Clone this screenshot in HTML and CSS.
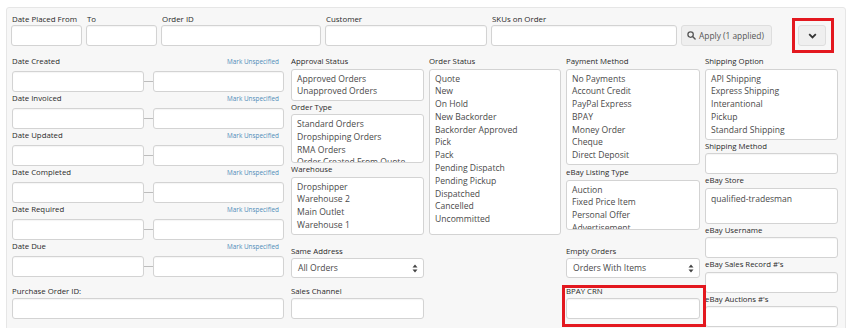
FILE: index.html
```html
<!DOCTYPE html>
<html lang="en">
<head>
  <meta charset="UTF-8" />
  <meta name="viewport" content="width=device-width, initial-scale=1.0"/>
  <title>Order Filters</title>
  <link rel="stylesheet" href="styles.css">
</head>
<body>

<div class="filter-panel">

  <!-- quick search row -->
  <div class="top-row">
    <div class="top-field w-date">
      <label class="top-label">Date Placed From</label>
      <div class="text-input"></div>
    </div>
    <div class="top-field w-date">
      <label class="top-label">To</label>
      <div class="text-input"></div>
    </div>
    <div class="top-field w-order">
      <label class="top-label">Order ID</label>
      <div class="text-input"></div>
    </div>
    <div class="top-field w-customer">
      <label class="top-label">Customer</label>
      <div class="text-input"></div>
    </div>
    <div class="top-field w-sku">
      <label class="top-label">SKUs on Order</label>
      <div class="text-input"></div>
    </div>
    <button class="apply-btn">
      <svg width="9" height="9" viewBox="0 0 10 10"><circle cx="4" cy="4" r="3" fill="none" stroke="#555" stroke-width="1.4"/><path d="M6.2 6.2 L9 9" stroke="#555" stroke-width="1.6" stroke-linecap="round"/></svg>
      Apply (1 applied)
    </button>
    <div class="toggle-wrap marked-toggle">
      <button class="toggle-btn">
        <svg width="9" height="6" viewBox="0 0 9 6"><path d="M1.2 1.2 L4.5 4.4 L7.8 1.2" fill="none" stroke="#333" stroke-width="1.8"/></svg>
      </button>
    </div>
  </div>

  <!-- advanced filters -->
  <div class="adv-grid">

    <div class="col col-dates">
      <div class="date-label"><span class="f-label">Date Created</span><a class="mark-link">Mark Unspecified</a></div>
      <div class="date-range"><div class="text-input"></div><span class="dash"></span><div class="text-input"></div></div>
      <div class="date-label"><span class="f-label">Date Invoiced</span><a class="mark-link">Mark Unspecified</a></div>
      <div class="date-range"><div class="text-input"></div><span class="dash"></span><div class="text-input"></div></div>
      <div class="date-label"><span class="f-label">Date Updated</span><a class="mark-link">Mark Unspecified</a></div>
      <div class="date-range"><div class="text-input"></div><span class="dash"></span><div class="text-input"></div></div>
      <div class="date-label"><span class="f-label">Date Completed</span><a class="mark-link">Mark Unspecified</a></div>
      <div class="date-range"><div class="text-input"></div><span class="dash"></span><div class="text-input"></div></div>
      <div class="date-label"><span class="f-label">Date Required</span><a class="mark-link">Mark Unspecified</a></div>
      <div class="date-range"><div class="text-input"></div><span class="dash"></span><div class="text-input"></div></div>
      <div class="date-label"><span class="f-label">Date Due</span><a class="mark-link">Mark Unspecified</a></div>
      <div class="date-range"><div class="text-input"></div><span class="dash"></span><div class="text-input"></div></div>
      <div class="f-label po-label">Purchase Order ID:</div>
      <div class="text-input"></div>
    </div>

    <div class="col">
      <div class="f-label">Approval Status</div>
      <div class="listbox h-approval">
        <div>Approved Orders</div>
        <div>Unapproved Orders</div>
      </div>
      <div class="f-label">Order Type</div>
      <div class="listbox h-type">
        <div>Standard Orders</div>
        <div>Dropshipping Orders</div>
        <div>RMA Orders</div>
        <div>Order Created From Quote</div>
      </div>
      <div class="f-label">Warehouse</div>
      <div class="listbox h-warehouse">
        <div>Dropshipper</div>
        <div>Warehouse 2</div>
        <div>Main Outlet</div>
        <div>Warehouse 1</div>
      </div>
      <div class="f-label gap-select">Same Address</div>
      <div class="select-box">
        <span>All Orders</span>
        <svg width="6" height="9" viewBox="0 0 6 9"><path d="M3 0.5 L5.5 3.5 H0.5 Z M3 8.5 L5.5 5.5 H0.5 Z" fill="#444"/></svg>
      </div>
      <div class="f-label gap-after-select">Sales Channel</div>
      <div class="text-input"></div>
    </div>

    <div class="col">
      <div class="f-label">Order Status</div>
      <div class="listbox h-status">
        <div>Quote</div>
        <div>New</div>
        <div>On Hold</div>
        <div>New Backorder</div>
        <div>Backorder Approved</div>
        <div>Pick</div>
        <div>Pack</div>
        <div>Pending Dispatch</div>
        <div>Pending Pickup</div>
        <div>Dispatched</div>
        <div>Cancelled</div>
        <div>Uncommitted</div>
      </div>
    </div>

    <div class="col">
      <div class="f-label">Payment Method</div>
      <div class="listbox h-payment">
        <div>No Payments</div>
        <div>Account Credit</div>
        <div>PayPal Express</div>
        <div>BPAY</div>
        <div>Money Order</div>
        <div>Cheque</div>
        <div>Direct Deposit</div>
      </div>
      <div class="f-label gap-small">eBay Listing Type</div>
      <div class="listbox h-listing">
        <div>Auction</div>
        <div>Fixed Price Item</div>
        <div>Personal Offer</div>
        <div>Advertisement</div>
      </div>
      <div class="f-label gap-empty">Empty Orders</div>
      <div class="select-box">
        <span>Orders With Items</span>
        <svg width="6" height="9" viewBox="0 0 6 9"><path d="M3 0.5 L5.5 3.5 H0.5 Z M3 8.5 L5.5 5.5 H0.5 Z" fill="#444"/></svg>
      </div>
      <div class="marked-field gap-after-select">
        <div class="f-label">BPAY CRN</div>
        <div class="text-input"></div>
      </div>
    </div>

    <div class="col">
      <div class="f-label">Shipping Option</div>
      <div class="listbox h-shipping">
        <div>API Shipping</div>
        <div>Express Shipping</div>
        <div>Interantional</div>
        <div>Pickup</div>
        <div>Standard Shipping</div>
      </div>
      <div class="f-label">Shipping Method</div>
      <div class="text-input"></div>
      <div class="f-label">eBay Store</div>
      <div class="listbox h-store">
        <div>qualified-tradesman</div>
      </div>
      <div class="f-label">eBay Username</div>
      <div class="text-input"></div>
      <div class="f-label">eBay Sales Record #'s</div>
      <div class="text-input"></div>
      <div class="f-label">eBay Auctions #'s</div>
      <div class="text-input"></div>
    </div>

  </div>
</div>

</body>
</html>
```

FILE: styles.css
```css
* { box-sizing: border-box; }

body {
  margin: 0;
  background: #fff;
  font-family: "Open Sans", "Liberation Sans", sans-serif;
  color: #333;
}

.filter-panel {
  width: 840px;
  margin: 7px 0 0 6px;
  padding: 5px 4px 12px 4px;
  background: #f7f7f7;
  border: 1px solid #e6e6e6;
  border-radius: 3px;
}

/* top row */
.top-row {
  display: flex;
  align-items: flex-end;
  gap: 4px;
}

.top-field {
  display: flex;
  flex-direction: column;
}

.top-label {
  font-size: 7.9px;
  font-weight: 500;
  line-height: 12px;
  padding-left: 1px;
  color: #2a2a2a;
}

.w-date { width: 71px; }
.w-order { width: 160px; }
.w-customer { width: 162px; }
.w-sku { width: 186px; }

.text-input {
  height: 21px;
  background: #fff;
  border: 1px solid #d3d3d3;
  border-radius: 3px;
  box-shadow: inset 0 1px 1px rgba(0,0,0,0.04);
}

.apply-btn {
  width: 91px;
  height: 21px;
  display: flex;
  align-items: center;
  gap: 3px;
  padding: 0 0 0 5px;
  background: #efefef;
  border: 1px solid #dedede;
  border-radius: 3px;
  font-family: inherit;
  font-size: 8.4px;
  color: #555;
}

.toggle-wrap {
  position: relative;
  margin-left: 22px;
}

.toggle-btn {
  width: 28px;
  height: 21px;
  display: flex;
  align-items: center;
  justify-content: center;
  padding: 0;
  background: #efefef;
  border: 1px solid #dedede;
  border-radius: 3px;
}

.marked-toggle::after {
  content: "";
  position: absolute;
  left: -6px;
  right: -8px;
  top: -7px;
  bottom: -7px;
  border: 3px solid #e3181f;
}

/* advanced grid */
.adv-grid {
  display: grid;
  grid-template-columns: 274px 133px 132px 134px 133px;
  column-gap: 5px;
  margin: 9px 0 0 1px;
}

.col {
  display: flex;
  flex-direction: column;
}

.col-dates { width: 272px; }

.f-label {
  font-size: 7.8px;
  font-weight: 500;
  line-height: 13.5px;
  white-space: nowrap;
  color: #2a2a2a;
}

.date-label {
  height: 16px;
  display: flex;
  justify-content: space-between;
  align-items: baseline;
  padding-right: 5px;
}

.mark-link {
  font-size: 6.4px;
  color: #4f8cb8;
}

.date-range {
  display: grid;
  grid-template-columns: 132px 9px 131px;
  align-items: center;
}

.dash {
  height: 1px;
  background: #bdbdbd;
}

.po-label { margin-top: 7.5px; }

.listbox {
  background: #fff;
  border: 1px solid #d3d3d3;
  border-radius: 3px;
  padding: 3px 5px;
  overflow: hidden;
  font-size: 8.6px;
  line-height: 12.8px;
  color: #4a4a4a;
  white-space: nowrap;
}

.h-approval { height: 32px; }
.h-type { height: 49px; }
.h-warehouse { height: 58px; }
.h-status { height: 166px; }
.h-payment { height: 96px; }
.h-listing { height: 50px; }
.h-shipping { height: 71px; }
.h-store { height: 36px; padding-top: 4px; }

.gap-select { margin-top: 10px; }
.gap-small { margin-top: 1.5px; }
.gap-empty { margin-top: 15px; }
.gap-after-select { margin-top: 6.5px; }

.select-box {
  height: 20px;
  display: flex;
  align-items: center;
  justify-content: space-between;
  padding: 0 5px 0 6px;
  background: #fff;
  border: 1px solid #d3d3d3;
  border-radius: 3px;
  font-size: 8.6px;
  color: #4a4a4a;
}

.marked-field {
  position: relative;
}

.marked-field::after {
  content: "";
  position: absolute;
  left: -4px;
  right: -6px;
  top: 0;
  bottom: -8px;
  border: 3px solid #e3181f;
}
```
